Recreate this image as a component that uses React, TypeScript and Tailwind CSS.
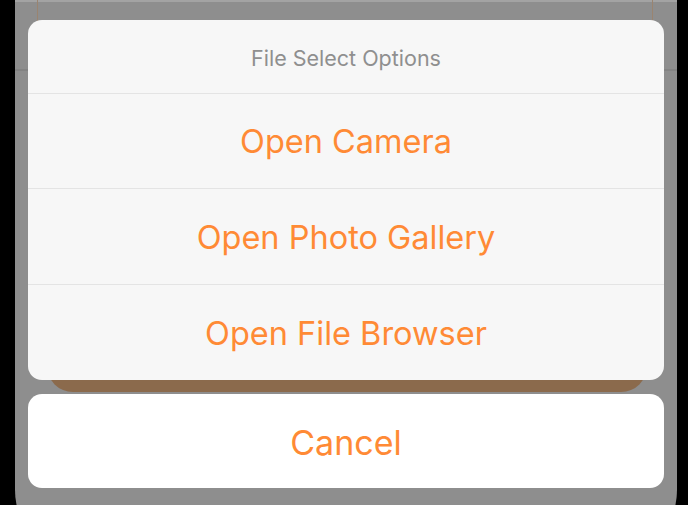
import React from "react";

const font = { fontFamily: "Inter, 'Noto Sans', sans-serif" };

export default function App() {
  return (
    <div className="w-[688px] h-[505px] bg-black flex overflow-hidden" style={font}>
      <div className="ml-[15px] w-[662px] h-[560px] shrink-0 bg-[#8e8e8e] rounded-b-[70px] relative">
        {/* background content under overlay */}
        <div className="absolute left-0 right-0 top-0 h-[2px] bg-[#a3a3a3]" />
        <div className="absolute left-[22px] top-0 h-[22px] w-px bg-[#9a8470]" />
        <div className="absolute left-[637px] top-0 h-[22px] w-px bg-[#9a8470]" />
        <div className="absolute left-0 right-0 top-[69px] h-[2px] bg-[#838383]" />
        <div className="absolute left-[32px] w-[600px] top-[340px] h-[52px] bg-[#8b6a4c] rounded-b-[26px]" />

        <div className="relative flex flex-col px-[13px] pt-[20px]">
          <div className="flex flex-col bg-[#f7f7f7] rounded-[14px] overflow-hidden">
            <div className="h-[74px] pt-[3px] flex items-center justify-center text-[21.5px] text-[#8f8f8f] border-b border-[#e4e4e4]">
              File Select Options
            </div>
            <div className="h-[95px] pt-[3px] flex items-center justify-center text-[32.5px] text-[#ff8a35] border-b border-[#e4e4e4]">
              Open Camera
            </div>
            <div className="h-[96px] pt-[3px] flex items-center justify-center text-[32.5px] text-[#ff8a35] border-b border-[#e4e4e4]">
              Open Photo Gallery
            </div>
            <div className="h-[95px] pt-[3px] flex items-center justify-center text-[32.5px] text-[#ff8a35]">
              Open File Browser
            </div>
          </div>
          <div className="mt-[14px] h-[94px] pt-[2px] bg-white rounded-[14px] flex items-center justify-center text-[34px] text-[#ff8a35]">
            Cancel
          </div>
        </div>
      </div>
    </div>
  );
}
